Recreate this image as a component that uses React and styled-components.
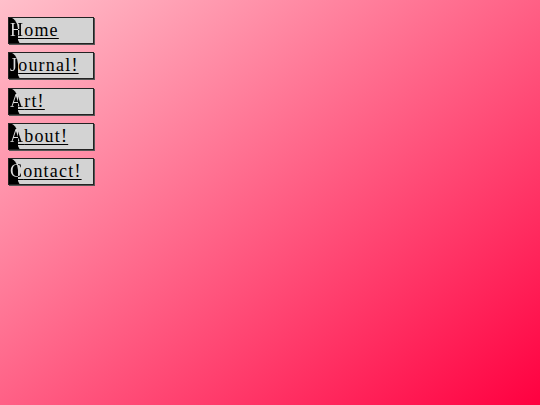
import styled, { createGlobalStyle } from "styled-components";

const GlobalStyle = createGlobalStyle`
  html, body {
    margin: 0;
    height: 100%;
  }
  body {
    background: linear-gradient(to bottom right, #ffc0cb, #ff0040);
    font-family: "Liberation Serif", "Times New Roman", serif;
  }
`;

const Page = styled.div`
  width: 540px;
  height: 405px;
  padding: 17px 8px;
  box-sizing: border-box;
`;

const Nav = styled.nav`
  display: flex;
  flex-direction: column;
  gap: 8.3px;
  align-items: flex-start;
`;

const Item = styled.a`
  position: relative;
  display: block;
  width: 86px;
  height: 27px;
  box-sizing: border-box;
  background: #d3d3d3;
  border: 1px solid #222;
  box-shadow: 1px 1px 0 #555;
  color: #000;
  font-size: 18px;
  line-height: 25px;
  letter-spacing: 1.2px;
  padding-left: 1px;
  text-decoration: underline;
  text-underline-offset: 2px;
  white-space: nowrap;
  overflow: hidden;

  &::before {
    content: "";
    position: absolute;
    left: -1px;
    top: -1px;
    bottom: -1px;
    width: 10px;
    background: #000;
    border-radius: 0 10px 0 0 / 0 12px 0 0;
  }

  &::after {
    content: "";
    position: absolute;
    left: 8px;
    bottom: -1px;
    border-left: 3px solid #000;
    border-top: 6px solid transparent;
  }
`;

const Initial = styled.span`
  position: relative;
  z-index: 1;
  background: linear-gradient(90deg, #ddd 8px, #000 8px);
  -webkit-background-clip: text;
  background-clip: text;
  color: transparent;
`;

const Rest = styled.span`
  position: relative;
`;

const links = ["Home", "Journal!", "Art!", "About!", "Contact!"];

export default function App() {
  return (
    <Page>
      <GlobalStyle />
      <Nav>
        {links.map((label) => (
          <Item key={label} href="#">
            <Initial>{label[0]}</Initial>
            <Rest>{label.slice(1)}</Rest>
          </Item>
        ))}
      </Nav>
    </Page>
  );
}
